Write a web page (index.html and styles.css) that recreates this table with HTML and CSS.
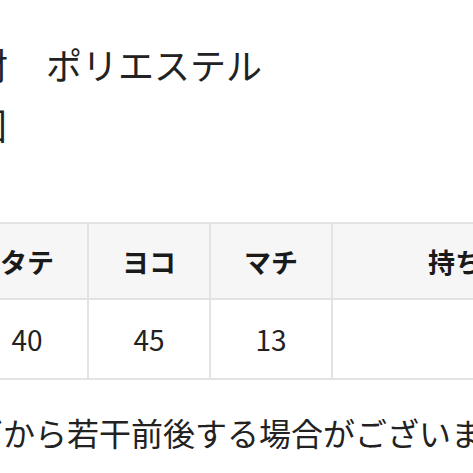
FILE: index.html
```html
<!DOCTYPE html>
<html lang="ja">
<head>
<meta charset="utf-8">
<link rel="stylesheet" href="styles.css">
</head>
<body>
<div class="page">
  <div class="spec">
    <div class="spec-row"><span class="label">素材</span><span class="value">ポリエステル</span></div>
    <div class="spec-row"><span class="label">原産国</span><span class="value"></span></div>
  </div>
  <table class="size">
    <thead>
      <tr><th class="c1">タテ</th><th class="c2">ヨコ</th><th class="c3">マチ</th><th class="c4">持ち手の高さ</th></tr>
    </thead>
    <tbody>
      <tr><td>40</td><td>45</td><td>13</td><td>20</td></tr>
    </tbody>
  </table>
  <p class="note">表記サイズから若干前後する場合がございます。</p>
</div>
</body>
</html>
```
FILE: styles.css
```css
html, body {
  margin: 0;
  padding: 0;
  background: #ffffff;
  overflow: hidden;
}
.page {
  width: 473px;
  height: 473px;
  overflow: hidden;
  font-family: "Noto Sans CJK JP", "Noto Sans", sans-serif;
  color: #222222;
}
.spec {
  padding-top: 34px;
}
.spec-row {
  display: flex;
  gap: 38px;
  font-size: 36px;
  line-height: 60px;
  white-space: nowrap;
}
.spec-row .label {
  margin-left: -64px;
}
.spec-row:nth-child(2) .label {
  margin-left: -101px;
}
.size {
  margin-top: 68px;
  margin-left: -35px;
  width: 712px;
  min-width: 712px;
  border-collapse: collapse;
  table-layout: fixed;
  white-space: nowrap;
}
.size th, .size td {
  border: 2px solid #e3e3e3;
  text-align: center;
  padding: 0;
}
.size th {
  background: #f6f6f6;
  font-weight: 700;
  font-size: 27px;
  height: 74px;
  color: #1a1a1a;
}
.size td {
  font-size: 28px;
  height: 78px;
  font-weight: 400;
  color: #222222;
}
.c1, .c2, .c3 { width: 120px; }
.c4 { width: 352px; }
.note {
  margin: 28px 0 0 -156px;
  font-size: 32px;
  line-height: 48px;
  white-space: nowrap;
  color: #222222;
}
```
